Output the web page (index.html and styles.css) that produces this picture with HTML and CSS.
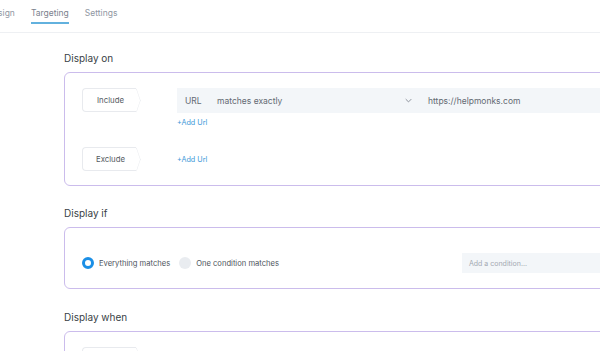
FILE: index.html
```html
<!DOCTYPE html>
<html>
<head>
<meta charset="utf-8">
<link rel="stylesheet" href="styles.css">
</head>
<body>
<header class="topbar">
  <nav class="tabs">
    <a class="tab">Design</a>
    <a class="tab active">Targeting</a>
    <a class="tab">Settings</a>
  </nav>
</header>
<main class="content">
  <section class="section">
    <h2 class="section-title">Display on</h2>
    <div class="card card-on">
      <div class="rule">
        <div class="pill">Include</div>
        <div class="rule-body">
          <div class="url-row">
            <span class="url-label">URL</span>
            <span class="url-match">matches exactly</span>
            <svg class="chev" viewBox="0 0 10 6" width="7" height="5"><path d="M1 1l4 4 4-4" fill="none" stroke="#8a909a" stroke-width="1.4"/></svg>
            <span class="url-value">https://helpmonks.com</span>
          </div>
          <a class="add-link">+Add Url</a>
        </div>
      </div>
      <div class="rule rule-ex">
        <div class="pill">Exclude</div>
        <div class="rule-body">
          <a class="add-link">+Add Url</a>
        </div>
      </div>
    </div>
  </section>
  <section class="section">
    <h2 class="section-title">Display if</h2>
    <div class="card card-if">
      <label class="radio"><span class="dot on"></span>Everything matches</label>
      <label class="radio"><span class="dot"></span>One condition matches</label>
      <div class="cond-input">Add a condition...</div>
    </div>
  </section>
  <section class="section">
    <h2 class="section-title">Display when</h2>
    <div class="card card-when">
      <div class="pill pill-when"></div>
    </div>
  </section>
</main>
</body>
</html>
```
FILE: styles.css
```css
html, body { margin: 0; padding: 0; }
body {
  width: 600px;
  height: 351px;
  overflow: hidden;
  background: #fff;
  font-family: Inter, "Noto Sans", sans-serif;
  color: #444a52;
}
.topbar {
  height: 33px;
  border-bottom: 1px solid #eef0f3;
  box-sizing: border-box;
  background: #fff;
}
.tabs {
  display: flex;
  gap: 16px;
  margin-left: -13px;
  height: 100%;
}
.tab {
  font-size: 8.5px;
  color: #9097a2;
  padding-top: 8px;
  height: 24px;
  box-sizing: border-box;
  border-bottom: 2px solid transparent;
}
.tab.active {
  color: #7b828e;
  border-bottom-color: #62b1de;
}
.content {
  padding-left: 64px;
  padding-top: 18px;
}
.section-title {
  margin: 0;
  font-size: 10px;
  font-weight: 400;
  color: #3a3f46;
  height: 21px;
  line-height: 14px;
}
.card {
  width: 620px;
  box-sizing: border-box;
  border: 1px solid #cbbcec;
  border-radius: 6px;
  background: #fff;
}
.card-on {
  height: 114px;
  padding: 15px 0 0 17px;
  margin-bottom: 20px;
}
.rule {
  display: flex;
  gap: 41px;
}
.rule-ex { margin-top: 20px; }
.pill {
  position: relative;
  width: 54px;
  height: 24px;
  border: 1px solid #e8eaee;
  border-right: none;
  border-radius: 4px 0 0 4px;
  font-size: 7.8px;
  color: #555b63;
  display: flex;
  align-items: center;
  justify-content: center;
  padding-left: 2px;
  box-sizing: border-box;
  background: #fff;
  flex: none;
}
.pill::after {
  content: "";
  position: absolute;
  right: -8.5px;
  top: 2.5px;
  width: 16px;
  height: 16px;
  border-top: 1.5px solid #e8eaee;
  border-right: 1.5px solid #e8eaee;
  transform: scaleX(0.34) rotate(45deg);
  background: #fff;
}
.rule-body {
  flex: 1;
  display: flex;
  flex-direction: column;
}
.url-row {
  height: 25px;
  background: #f3f6f9;
  display: flex;
  align-items: center;
  padding-left: 8px;
  font-size: 8.5px;
  color: #636a73;
}
.url-label { width: 32px; flex: none; }
.url-match { width: 188px; flex: none; }
.chev { margin-right: 16px; flex: none; }
.url-value { color: #636a73; }
.add-link {
  font-size: 7.2px;
  color: #3b98d8;
  margin-top: 5px;
  line-height: 9px;
}
.rule-ex .rule-body { justify-content: center; }
.rule-ex .add-link { margin-top: 0; }
.card-if {
  height: 62px;
  display: flex;
  align-items: center;
  padding: 10px 0 0 17px;
  margin-bottom: 21px;
}
.radio {
  display: flex;
  align-items: center;
  font-size: 7.6px;
  color: #4e545c;
  margin-right: 6px;
}
.dot {
  width: 12px;
  height: 12px;
  box-sizing: border-box;
  border-radius: 50%;
  background: #e9ecf0;
  margin-right: 5px;
}
.dot.on {
  background: #fff;
  border: 3px solid #1b8fe6;
}
.radio:first-child { margin-right: 9px; }
.cond-input {
  margin-left: auto;
  width: 200px;
  height: 20px;
  margin-right: 21px;
  background: #f3f6f9;
  font-size: 7px;
  color: #a3a9b2;
  display: flex;
  align-items: center;
  padding-left: 7px;
  box-sizing: border-box;
}
.card-when {
  height: 60px;
  padding: 15px 0 0 17px;
}
.pill-when { height: 30px; }
```
